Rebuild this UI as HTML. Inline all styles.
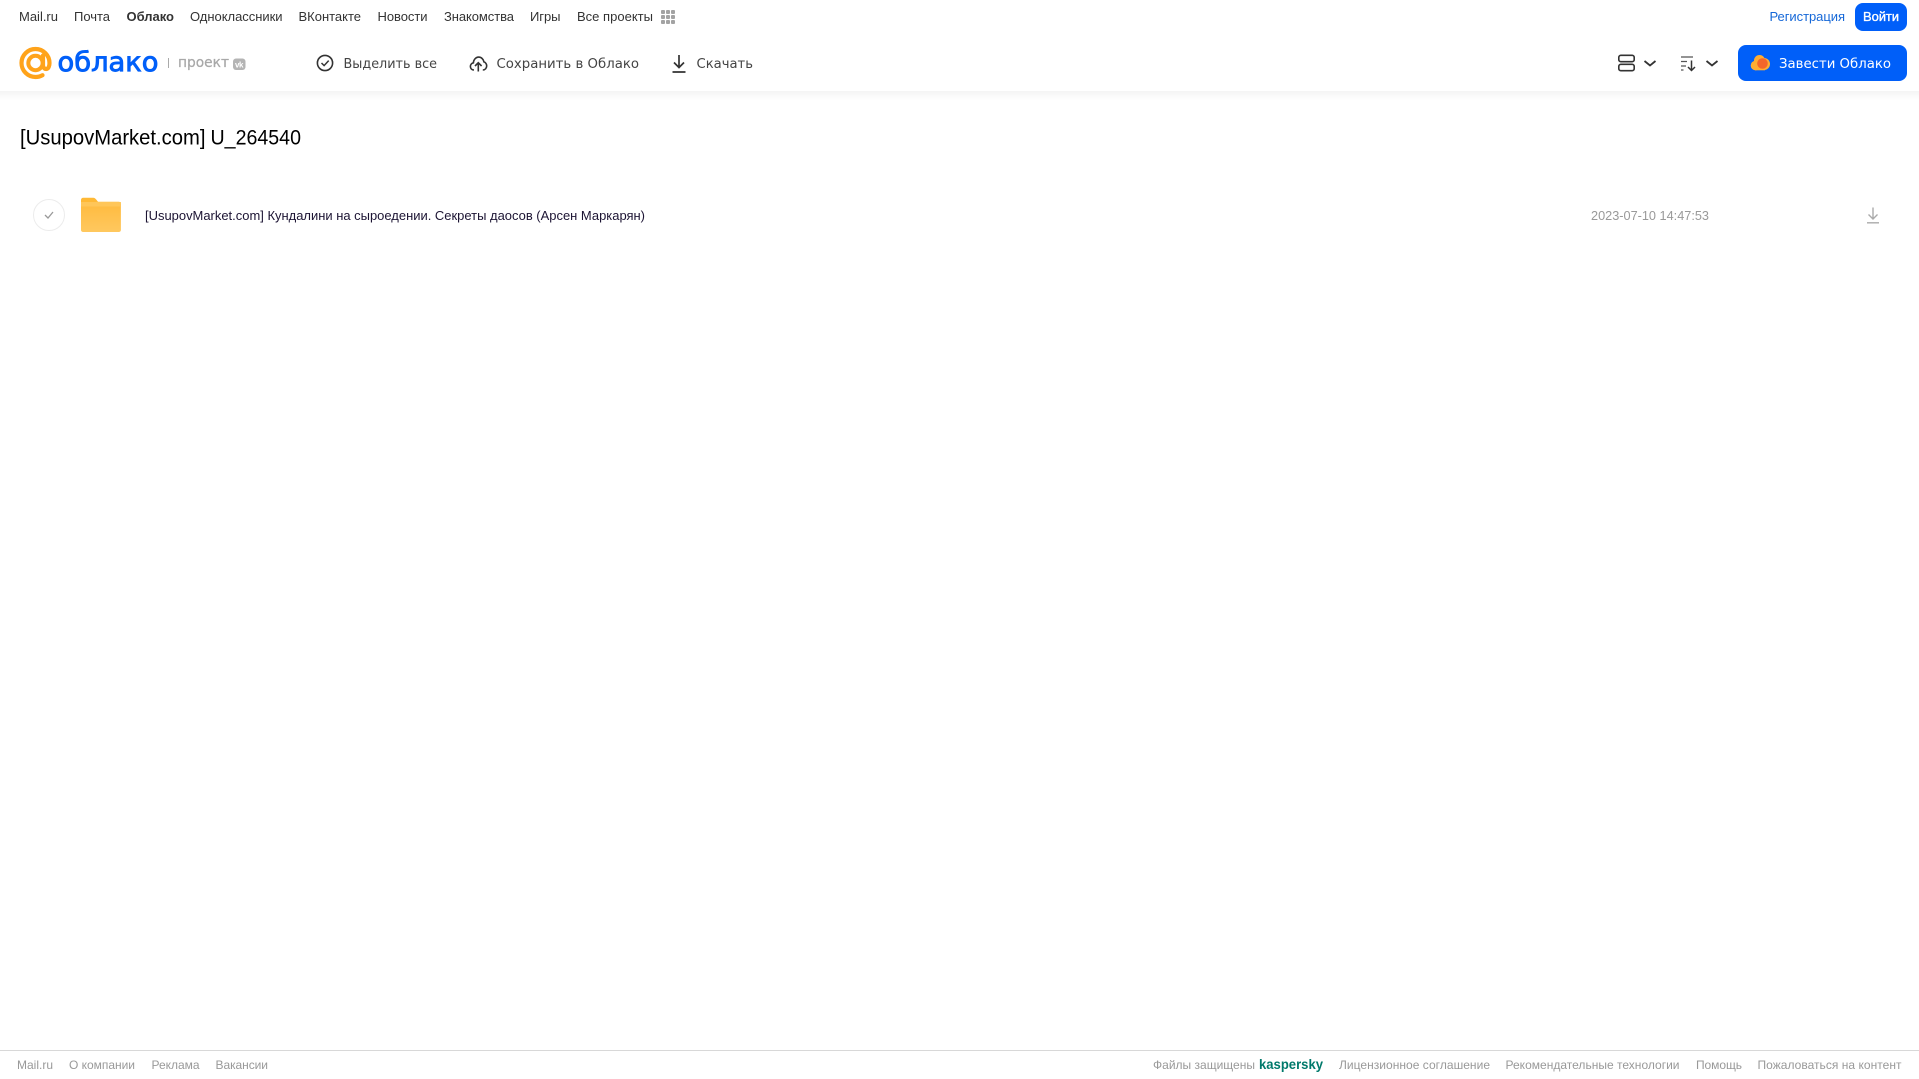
<!DOCTYPE html>
<html lang="ru">
<head>
<meta charset="utf-8">
<title>[UsupovMarket.com] U_264540</title>
<style>
html,body{margin:0;padding:0;background:#fff;width:1919px;height:1079px;overflow:hidden}
svg{display:block;position:absolute;left:0;top:0}
text{font-family:"Liberation Sans",sans-serif;white-space:pre}
.n{font-size:13px;fill:#333}
.t{font-size:13.5px;fill:#444;font-family:"DejaVu Sans",sans-serif}
.f{font-size:12px;fill:#999}
</style>
</head>
<body>
<svg width="1919" height="1079" viewBox="0 0 1919 1079" xmlns="http://www.w3.org/2000/svg">
<defs>
<linearGradient id="sh" x1="0" y1="0" x2="0" y2="1"><stop offset="0" stop-color="#f4f4f4"/><stop offset="1" stop-color="#fff"/></linearGradient>
<linearGradient id="fg" x1="0" y1="0" x2="0" y2="1"><stop offset="0" stop-color="#ffbc42"/><stop offset="1" stop-color="#ffc85f"/></linearGradient>
</defs>
<rect x="0" y="91" width="1919" height="9" fill="url(#sh)"/>

<!-- top nav -->
<text class="n" x="19" y="21" textLength="39">Mail.ru</text>
<text class="n" x="74" y="21" textLength="36">Почта</text>
<text class="n" x="126.500" y="21" textLength="47.500" font-weight="700">Облако</text>
<text class="n" x="190" y="21" textLength="92.500">Одноклассники</text>
<text class="n" x="298.500" y="21" textLength="62.500">ВКонтакте</text>
<text class="n" x="377.500" y="21" textLength="50">Новости</text>
<text class="n" x="444" y="21" textLength="70">Знакомства</text>
<text class="n" x="530" y="21" textLength="30.500">Игры</text>
<text class="n" x="577" y="21" textLength="76">Все проекты</text>
<g fill="#a3a3a3">
<rect x="661" y="10" width="4" height="4" rx="1"/><rect x="666" y="10" width="4" height="4" rx="1"/><rect x="671" y="10" width="4" height="4" rx="1"/>
<rect x="661" y="15" width="4" height="4" rx="1"/><rect x="666" y="15" width="4" height="4" rx="1"/><rect x="671" y="15" width="4" height="4" rx="1"/>
<rect x="661" y="20" width="4" height="4" rx="1"/><rect x="666" y="20" width="4" height="4" rx="1"/><rect x="671" y="20" width="4" height="4" rx="1"/>
</g>
<text class="n" x="1769.500" y="21" textLength="75.500" style="fill:#1668d8">Регистрация</text>
<rect x="1855" y="3" width="52" height="28" rx="8" fill="#005ff9"/>
<text class="n" x="1863" y="21" textLength="36" stroke="#fff" stroke-width=".35" style="fill:#fff">Войти</text>

<!-- logo -->
<path d="M43 55.500v9.500c0 2.500 1.600 4 3.200 4 2.200 0 3.300-3 3.300-6a14 14 0 1 0-14 14c2.800 0 5-.6 7-1.800" fill="none" stroke="#ffa31a" stroke-width="4.200" stroke-linecap="round"/>
<circle cx="35.500" cy="63" r="7.200" fill="none" stroke="#ffa31a" stroke-width="4"/>
<text x="57.500" y="71" font-size="27" fill="#005ff9" stroke="#005ff9" stroke-width=".9" textLength="101" lengthAdjust="spacingAndGlyphs" style="font-family:'DejaVu Sans',sans-serif">облако</text>
<rect x="168" y="58" width="1" height="10" fill="#aaa"/>
<text x="178" y="67" font-size="14" fill="#a8a8a8" stroke="#a8a8a8" stroke-width=".25" textLength="51" lengthAdjust="spacingAndGlyphs" style="font-family:'DejaVu Sans',sans-serif">проект</text>
<rect x="233" y="58.500" width="12.500" height="11.500" rx="3" fill="#b4b4b4"/>
<text x="235" y="67.500" font-size="8" font-weight="700" fill="#fff" textLength="8.500">vk</text>

<!-- toolbar -->
<circle cx="325" cy="63" r="7.600" fill="none" stroke="#333" stroke-width="1.600"/>
<path d="M321.500 63l2.600 2.600 4.600-5" fill="none" stroke="#333" stroke-width="1.500"/>
<text class="t" x="343.500" y="68" textLength="93.500" lengthAdjust="spacingAndGlyphs">Выделить все</text>

<path d="M474 70c-2.300 0-3.600-1.700-3.600-3.500 0-2 1.400-3.400 3-3.700.2-3.200 2.500-5.700 5.200-5.700 2.700 0 4.900 2.100 5.300 4.800 1.700.4 2.800 2.300 2.800 4 0 2.200-1.500 4.100-3.900 4.100" fill="none" stroke="#333" stroke-width="1.600"/>
<path d="M478.300 71.500v-8.500M475 66l3.300-3.300 3.300 3.300" fill="none" stroke="#333" stroke-width="1.600"/>
<text class="t" x="496.500" y="68" textLength="142.500" lengthAdjust="spacingAndGlyphs">Сохранить в Облако</text>

<path d="M679 55v12.500M674 62.500l5 5 5-5M672.500 72h13" fill="none" stroke="#333" stroke-width="1.700"/>
<text class="t" x="696.500" y="68" textLength="56.500" lengthAdjust="spacingAndGlyphs">Скачать</text>

<!-- right tools -->
<rect x="1618.800" y="55.300" width="15.400" height="6.400" rx="2" fill="none" stroke="#333" stroke-width="1.600"/>
<rect x="1618.800" y="64.300" width="15.400" height="6.400" rx="2" fill="none" stroke="#333" stroke-width="1.600"/>
<path d="M1644.500 61l5.500 4.500 5.500-4.500" fill="none" stroke="#333" stroke-width="1.800"/>
<path d="M1681 57h12M1681 61.500h6M1681 66h5M1681 70h2.500" fill="none" stroke="#555" stroke-width="1.300"/>
<path d="M1691.500 60.500v10M1688 67l3.500 3.500 3.500-3.500" fill="none" stroke="#333" stroke-width="1.500"/>
<path d="M1706.500 61l5.500 4.500 5.500-4.500" fill="none" stroke="#333" stroke-width="1.800"/>

<rect x="1738" y="45" width="169" height="36" rx="8" fill="#005ff9"/>
<circle cx="1755.500" cy="65.500" r="4.800" fill="#ffad33"/>
<circle cx="1759.500" cy="60.500" r="5.500" fill="#ffad33"/>
<circle cx="1764" cy="64" r="6" fill="#ffad33"/>
<rect x="1755" y="64" width="10" height="6.300" fill="#ffad33"/>
<circle cx="1762.500" cy="63.500" r="5.300" fill="#f4662a"/>
<text x="1779" y="68" font-size="13.500" fill="#fff" textLength="112" lengthAdjust="spacingAndGlyphs" style="font-family:'DejaVu Sans',sans-serif">Завести Облако</text>

<!-- title -->
<text x="20" y="144.500" font-size="21" fill="#000" textLength="185.500" lengthAdjust="spacingAndGlyphs">[UsupovMarket.com]</text>
<text x="210.500" y="144.500" font-size="21" fill="#000" textLength="90.500" lengthAdjust="spacingAndGlyphs">U_264540</text>

<!-- row -->
<circle cx="49" cy="215" r="15.500" fill="#fff" stroke="#ececec" stroke-width="1"/>
<path d="M45 215l3 3 5-6" fill="none" stroke="#999" stroke-width="1.300"/>
<path d="M81 200c0-1.300.9-2.300 2.200-2.300h10c1.300 0 2.200.8 3 1.800l1.800 2.200h20.700c1.200 0 2.200 1 2.200 2.200v2.100H81z" fill="#ffb936"/>
<path d="M81 206h39.900v24c0 1.200-1 2-2.200 2H83.200c-1.200 0-2.200-.8-2.200-2z" fill="url(#fg)"/>
<rect x="81" y="202" width="39.900" height="4.500" fill="#ffc659"/>
<text x="145" y="220" font-size="13" fill="#1c1433" textLength="500" lengthAdjust="spacingAndGlyphs">[UsupovMarket.com] Кундалини на сыроедении. Секреты даосов (Арсен Маркарян)</text>
<text x="1591" y="220" font-size="13" fill="#999" textLength="118" lengthAdjust="spacingAndGlyphs">2023-07-10 14:47:53</text>
<path d="M1873 207.500v11M1868.500 214.500l4.500 4.500 4.500-4.500M1867 222.800h12" fill="none" stroke="#aaa" stroke-width="1.400"/>

<!-- footer -->
<rect x="0" y="1050" width="1919" height="1" fill="#d8d8d8"/>
<text class="f" x="17" y="1069" textLength="36">Mail.ru</text>
<text class="f" x="69" y="1069" textLength="66">О компании</text>
<text class="f" x="151.500" y="1069" textLength="48">Реклама</text>
<text class="f" x="215.500" y="1069" textLength="52.500">Вакансии</text>
<text class="f" x="1153" y="1069" textLength="102">Файлы защищены</text>
<text x="1259" y="1069" font-size="13.500" font-weight="700" fill="#00796b" textLength="64" lengthAdjust="spacingAndGlyphs">kaspersky</text>
<text class="f" x="1339" y="1069" textLength="151">Лицензионное соглашение</text>
<text class="f" x="1505.500" y="1069" textLength="174">Рекомендательные технологии</text>
<text class="f" x="1696" y="1069" textLength="46">Помощь</text>
<text class="f" x="1757.500" y="1069" textLength="144">Пожаловаться на контент</text>
</svg>
</body>
</html>
